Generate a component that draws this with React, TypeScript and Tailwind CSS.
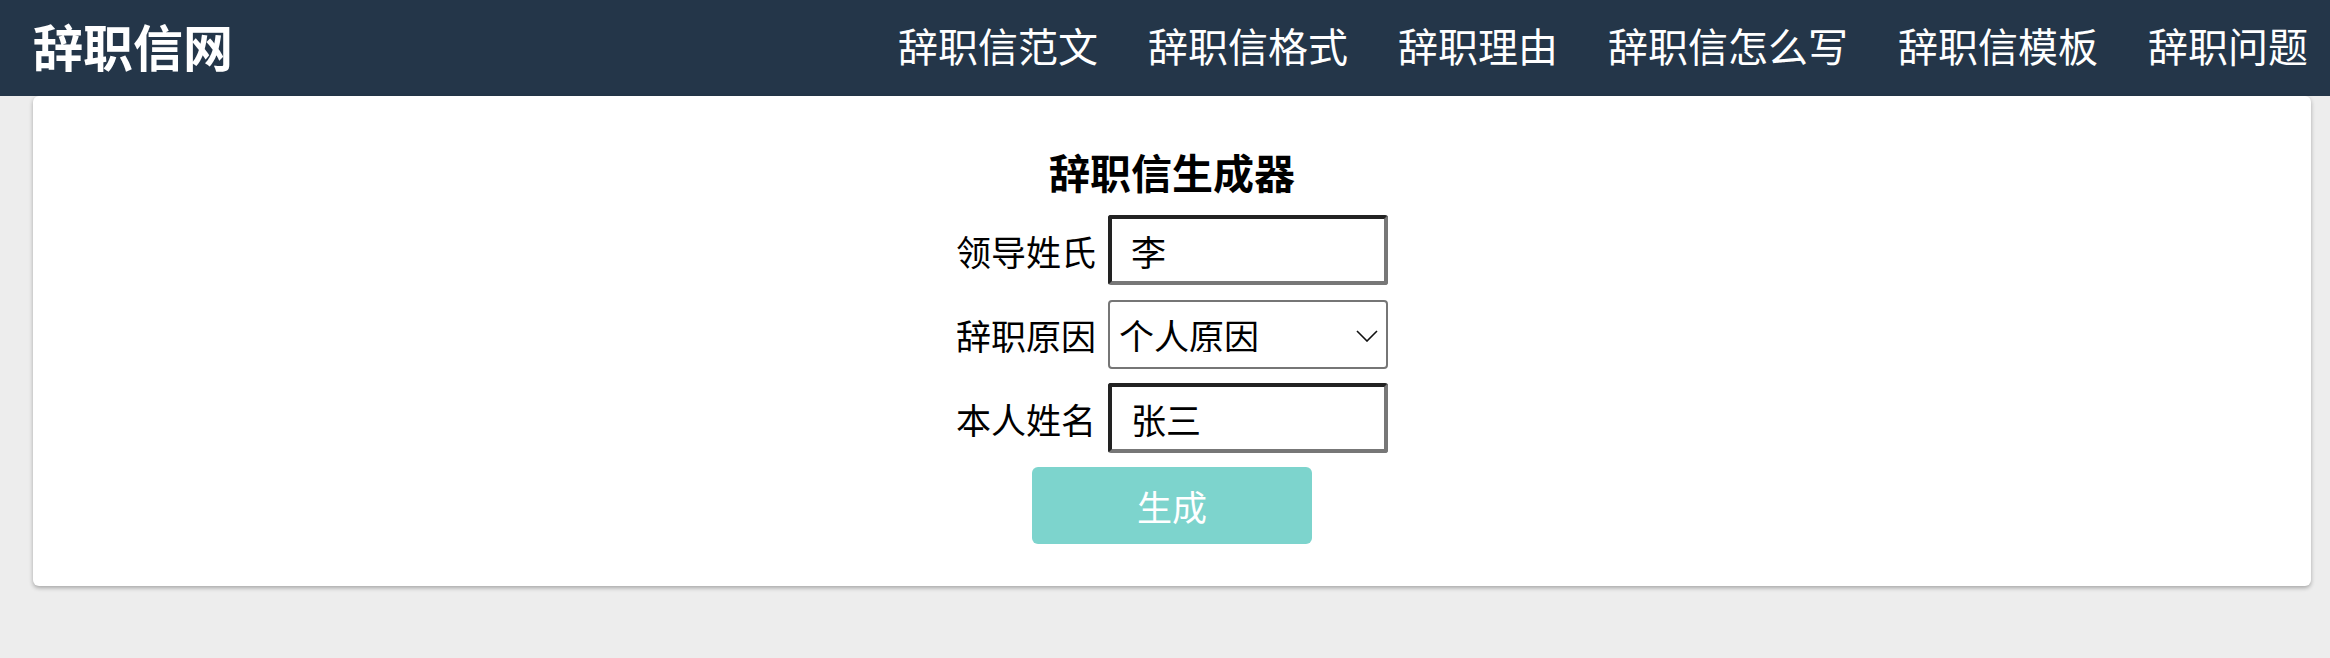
import React from "react";

function Field({ label, value }: { label: string; value: string }) {
  return (
    <div className="flex h-[70px] items-center gap-[12px]">
      <span className="w-[140px] text-[35px] leading-none text-black">{label}</span>
      <input
        readOnly
        value={value}
        className="box-border h-[70px] w-[280px] rounded-[3px] border-4 border-t-[#222222] border-l-[#222222] border-r-[#777777] border-b-[#777777] bg-white pl-[19px] text-[35px] leading-none text-black outline-none"
      />
    </div>
  );
}

export default function App() {
  const nav = ["辞职信范文", "辞职信格式", "辞职理由", "辞职信怎么写", "辞职信模板", "辞职问题"];
  return (
    <div className="min-h-screen bg-[#ededed] [font-family:'Noto_Sans_CJK_SC','Noto_Sans',sans-serif]">
      <header className="flex h-[96px] items-center justify-between bg-[#243649] pb-[6px] pl-[33px] pr-[22px] text-white">
        <div className="text-[50px] font-bold leading-none">辞职信网</div>
        <nav className="flex gap-[50px] text-[40px] leading-none">
          {nav.map((n) => (
            <a key={n} className="whitespace-nowrap">
              {n}
            </a>
          ))}
        </nav>
      </header>
      <main className="ml-[33px] flex w-[2278px] flex-col items-center rounded-[6px] bg-white pb-[42px] pt-[46px] shadow-[0_2px_4px_rgba(0,0,0,0.3)]">
        <h1 className="text-[41px] font-bold leading-[58px] text-black">辞职信生成器</h1>
        <div className="mt-[15px] flex flex-col items-center gap-[14px]">
          <Field label="领导姓氏" value="李" />
          <div className="flex h-[70px] items-center gap-[12px]">
            <span className="w-[140px] text-[35px] leading-none text-black">辞职原因</span>
            <div className="relative h-[69px] w-[280px]">
              <select
                defaultValue="个人原因"
                className="box-border h-[69px] w-[280px] appearance-none rounded-[4px] border-2 border-[#767676] bg-white pl-[9px] text-[35px] leading-none text-black outline-none"
              >
                <option>个人原因</option>
                <option>家庭原因</option>
                <option>身体原因</option>
              </select>
              <svg
                className="pointer-events-none absolute right-[10px] top-[30px]"
                width="22"
                height="12"
                viewBox="0 0 22 12"
                fill="none"
              >
                <polyline points="1,1 11,11 21,1" stroke="#111" strokeWidth="1.6" />
              </svg>
            </div>
          </div>
          <Field label="本人姓名" value="张三" />
          <button className="h-[77px] w-[280px] rounded-[6px] bg-[#7dd4cd] text-[35px] leading-none text-white">
            生成
          </button>
        </div>
      </main>
    </div>
  );
}
